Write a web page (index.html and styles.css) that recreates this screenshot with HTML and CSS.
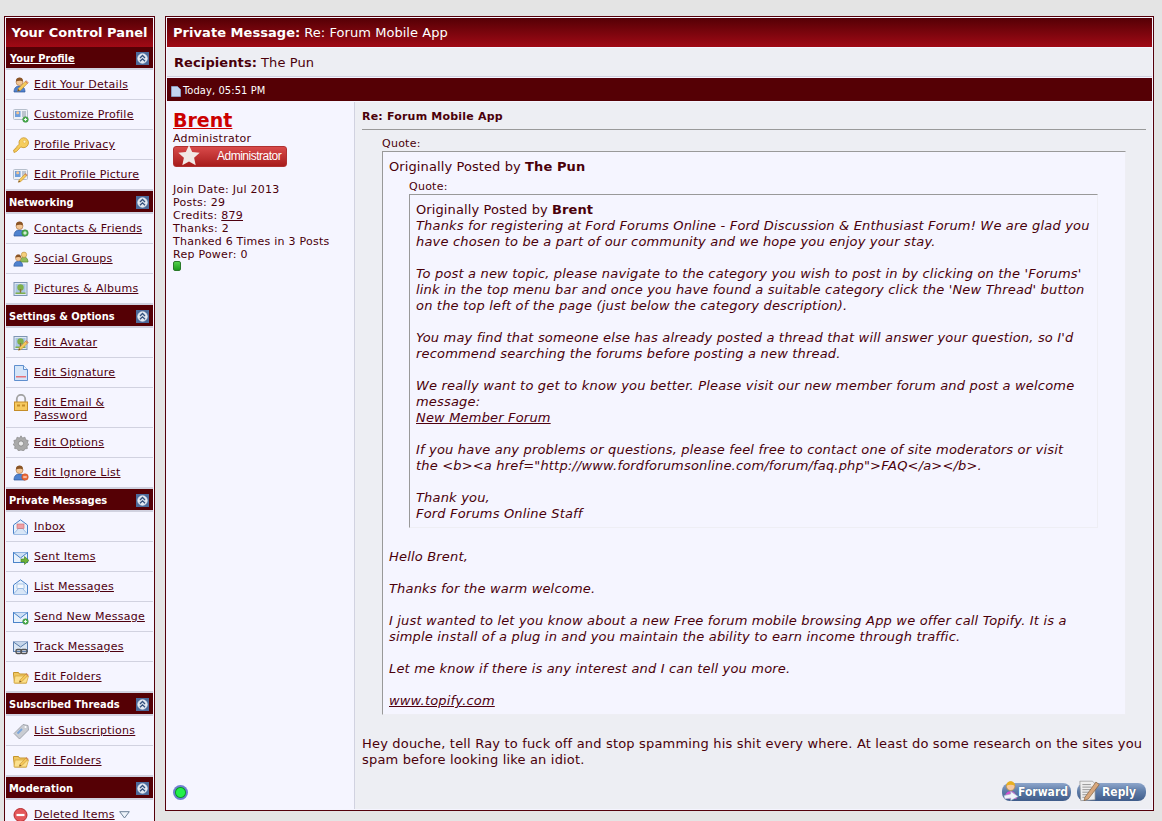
FILE: index.html
```html
<!DOCTYPE html>
<html lang="en">
<head>
<meta charset="utf-8">
<title>Private Message: Re: Forum Mobile App</title>
<link rel="stylesheet" href="styles.css">
</head>
<body>
<svg class="sprite" xmlns="http://www.w3.org/2000/svg">
  <defs>
    <symbol id="s-person" viewBox="0 0 16 16">
      <path d="M1 15c0-4 2-6 5.500-6s5.500 2 5.500 6z" fill="#4f82cf" stroke="#2c5596" stroke-width=".7"/>
      <circle cx="6.500" cy="5" r="3.500" fill="#f2c594" stroke="#a9713e" stroke-width=".6"/>
      <path d="M3 4.500C2.800 1.500 5 .6 6.700 .6s3.400 1 3.200 3.900C8.500 3.500 5 3.500 3 4.500z" fill="#8a5426"/>
    </symbol>
    <symbol id="s-pencil" viewBox="0 0 16 16">
      <path d="M3 11.500 11.500 3l2.500 2.500L5.500 14 2 15z" fill="#f4c95a" stroke="#b9822a" stroke-width=".7"/>
      <path d="M11.500 3l1-1 2.500 2.500-1 1z" fill="#e99a7a" stroke="#b9622a" stroke-width=".6"/>
      <path d="M2 15l.8-2.600 1.800 1.800z" fill="#6b4a2a"/>
    </symbol>
    <symbol id="s-plus" viewBox="0 0 16 16">
      <circle cx="8" cy="8" r="6.500" fill="#4caf50" stroke="#2b7a30"/>
      <path d="M8 4.500v7M4.500 8h7" stroke="#fff" stroke-width="2"/>
    </symbol>
    <symbol id="s-minus" viewBox="0 0 16 16">
      <circle cx="8" cy="8" r="6.500" fill="#ec6a3a" stroke="#b8431a"/>
      <path d="M4.500 8h7" stroke="#fff" stroke-width="2"/>
    </symbol>
    <symbol id="s-card" viewBox="0 0 16 16">
      <rect x=".5" y="2.500" width="14" height="10" rx="1" fill="#eef1f6" stroke="#b6bfcc"/>
      <rect x="2" y="4" width="5.500" height="6" fill="#6f9fdc"/>
      <circle cx="4.700" cy="5.800" r="1.500" fill="#f2c594"/>
      <path d="M9 5h4M9 7h4M9 9h4" stroke="#8a97a8"/>
    </symbol>
    <symbol id="s-pic" viewBox="0 0 16 16">
      <rect x="1" y="1.500" width="13" height="13" fill="#dfe8f2" stroke="#7e95b3"/>
      <rect x="2.500" y="3" width="10" height="10" fill="#a8c4e4"/>
      <circle cx="7.500" cy="6.500" r="3.200" fill="#7fb04a"/>
      <rect x="6.800" y="8" width="1.400" height="5" fill="#8b6a3a"/>
      <rect x="2.500" y="11.500" width="10" height="1.500" fill="#7fb04a"/>
    </symbol>
    <symbol id="s-env" viewBox="0 0 16 16">
      <rect x=".5" y="3.500" width="14" height="10" fill="#e8f1fb" stroke="#4b83c9"/>
      <path d="M.5 3.500 7.500 9l7-5.500" fill="#cfe0f5" stroke="#4b83c9"/>
    </symbol>
    <symbol id="s-envopen" viewBox="0 0 16 16">
      <path d="M.5 6 7.500.8 14.500 6v9H.5z" fill="#e8f1fb" stroke="#4b83c9"/>
      <path d="M.5 15 5.500 9.500h4L14.500 15" fill="#d8e6f7" stroke="#7ea8dc" stroke-width=".7"/>
    </symbol>
    <symbol id="s-folder" viewBox="0 0 16 16">
      <path d="M.5 5V3.500h5l1 1.500h7v9h-12z" fill="#f0c760" stroke="#c4952c"/>
      <path d="M2 7h13.500l-2 7h-12.500z" fill="#fbe08d" stroke="#d2a43a" stroke-width=".7"/>
    </symbol>
    <symbol id="s-up" viewBox="0 0 13 13">
      <rect width="13" height="13" fill="#4d6b9b"/>
      <circle cx="6.500" cy="6.500" r="4.700" fill="#dfe6f0" stroke="#f4f6fa" stroke-width=".8"/>
      <path d="M4 6 6.500 3.500 9 6M4 9.300 6.500 6.800 9 9.300" fill="none" stroke="#34507c" stroke-width="1.300"/>
    </symbol>
  </defs>
</svg>

<div class="page">
  <aside class="panel">
    <div class="panel-title">Your Control Panel</div>

    <section class="group">
      <h3 class="group-head"><a class="head-link" href="#">Your Profile</a><svg class="toggle"><use href="#s-up"/></svg></h3>
      <a class="row" href="#"><span class="ico"><svg viewBox="0 0 16 16"><use href="#s-person"/><use href="#s-pencil" x="3" y="2" width="13" height="13"/></svg></span><span class="lbl">Edit Your Details</span></a>
      <a class="row" href="#"><span class="ico"><svg viewBox="0 0 16 16"><use href="#s-card"/><use href="#s-plus" x="9" y="9" width="7" height="7"/></svg></span><span class="lbl">Customize Profile</span></a>
      <a class="row" href="#"><span class="ico"><svg viewBox="0 0 16 16"><path d="M10.500 .7a5 5 0 1 1-2.700 9.200L3.500 14.500 1 15.500.6 13l1.400-.5.300-1.400 1.400-.2.200-1.400 2.300-2.300A5 5 0 0 1 10.500 .7z" fill="#f6cd5c" stroke="#c9952a" stroke-width=".8"/><circle cx="11.500" cy="4.700" r="1.400" fill="#fff3c4" stroke="#d8a83c" stroke-width=".5"/></svg></span><span class="lbl">Profile Privacy</span></a>
      <a class="row" href="#"><span class="ico"><svg viewBox="0 0 16 16"><use href="#s-card"/><use href="#s-pencil" x="4" y="5" width="11" height="11"/></svg></span><span class="lbl">Edit Profile Picture</span></a>
    </section>

    <section class="group">
      <h3 class="group-head">Networking<svg class="toggle"><use href="#s-up"/></svg></h3>
      <a class="row" href="#"><span class="ico"><svg viewBox="0 0 16 16"><use href="#s-person"/><use href="#s-plus" x="8" y="8" width="8" height="8"/></svg></span><span class="lbl">Contacts &amp; Friends</span></a>
      <a class="row" href="#"><span class="ico"><svg viewBox="0 0 16 16"><path d="M7 11c0-3 1.500-5 4-5s4 2 4 5z" fill="#90bb58" stroke="#5b8a2c" stroke-width=".7"/><circle cx="11" cy="3.800" r="2.700" fill="#f5cf7c" stroke="#b78a3c" stroke-width=".6"/><use href="#s-person" x="0" y="3" width="13" height="13"/></svg></span><span class="lbl">Social Groups</span></a>
      <a class="row" href="#"><span class="ico"><svg viewBox="0 0 16 16"><use href="#s-pic"/></svg></span><span class="lbl">Pictures &amp; Albums</span></a>
    </section>

    <section class="group">
      <h3 class="group-head">Settings &amp; Options<svg class="toggle"><use href="#s-up"/></svg></h3>
      <a class="row" href="#"><span class="ico"><svg viewBox="0 0 16 16"><use href="#s-pic"/><use href="#s-pencil" x="4" y="4" width="12" height="12"/></svg></span><span class="lbl">Edit Avatar</span></a>
      <a class="row" href="#"><span class="ico"><svg viewBox="0 0 16 16"><path d="M1.500 .5h9l4 4v11h-13z" fill="#d5e5f8" stroke="#5f8fce"/><path d="M10.500 .5v4h4" fill="#eef5fd" stroke="#5f8fce"/><rect x="3" y="11" width="10" height="1.500" fill="#e5737a"/></svg></span><span class="lbl">Edit Signature</span></a>
      <a class="row tall" href="#"><span class="ico"><svg class="lock" viewBox="0 0 16 17"><path d="M3.800 9V5a4.200 4.200 0 0 1 8.400 0v4" fill="none" stroke="#a3a3a3" stroke-width="1.800"/><rect x="1.500" y="8" width="13" height="8.500" fill="#f6c95e" stroke="#c58d28"/><rect x="4" y="10.500" width="3" height="2" fill="#c58d28"/><rect x="9" y="10.500" width="3" height="2" fill="#c58d28"/></svg></span><span class="lbl">Edit Email &amp;<br>Password</span></a>
      <a class="row" href="#"><span class="ico"><svg viewBox="0 0 16 16"><path d="M8 .8 9.500 3l2.500-.8.700 2.600 2.500.7-.8 2.500L16 9.500l-2 1.500.4 2.600-2.600.3-1.300 2.200L8 15l-2.500 1-1.300-2.200-2.600-.3L2 11 0 9.500 1.600 8 .8 5.500l2.500-.7.700-2.600 2.500.8z" fill="#a9a9a9" stroke="#818181" stroke-width=".6"/><circle cx="8" cy="8.500" r="2.600" fill="#e9e9e9" stroke="#7a7a7a" stroke-width=".7"/></svg></span><span class="lbl">Edit Options</span></a>
      <a class="row" href="#"><span class="ico"><svg viewBox="0 0 16 16"><use href="#s-person"/><use href="#s-minus" x="8" y="8" width="8" height="8"/></svg></span><span class="lbl">Edit Ignore List</span></a>
    </section>

    <section class="group">
      <h3 class="group-head">Private Messages<svg class="toggle"><use href="#s-up"/></svg></h3>
      <a class="row" href="#"><span class="ico"><svg viewBox="0 0 16 16"><use href="#s-envopen"/><rect x="4" y="5" width="7" height="4.500" fill="#f0a0a4" stroke="#c96a70" stroke-width=".6"/></svg></span><span class="lbl">Inbox</span></a>
      <a class="row" href="#"><span class="ico"><svg viewBox="0 0 16 16"><use href="#s-env"/><path d="M8 10h3.500V7.500L16 11.500 11.500 15.500V13H8z" fill="#6db23a" stroke="#3f7f1c" stroke-width=".6"/></svg></span><span class="lbl">Sent Items</span></a>
      <a class="row" href="#"><span class="ico"><svg viewBox="0 0 16 16"><use href="#s-envopen"/><rect x="4" y="5" width="7" height="4.500" fill="#f4f8fd" stroke="#7ea8dc" stroke-width=".6"/></svg></span><span class="lbl">List Messages</span></a>
      <a class="row" href="#"><span class="ico"><svg viewBox="0 0 16 16"><use href="#s-env"/><use href="#s-plus" x="9" y="9" width="7" height="7"/></svg></span><span class="lbl">Send New Message</span></a>
      <a class="row" href="#"><span class="ico"><svg viewBox="0 0 16 16"><rect x=".5" y="3" width="14" height="9.500" fill="#dbe6f3" stroke="#5a7dac"/><path d="M.5 3 7.500 8l7-5" fill="#c6d6ea" stroke="#5a7dac"/><rect x="3" y="10.500" width="5.500" height="4" rx="1.500" fill="none" stroke="#555" stroke-width="1.400"/><rect x="8" y="10.500" width="6" height="4" rx="1.500" fill="none" stroke="#555" stroke-width="1.400"/></svg></span><span class="lbl">Track Messages</span></a>
      <a class="row" href="#"><span class="ico"><svg viewBox="0 0 16 16"><use href="#s-folder"/><use href="#s-pencil" x="5" y="3" width="11" height="11"/></svg></span><span class="lbl">Edit Folders</span></a>
    </section>

    <section class="group">
      <h3 class="group-head">Subscribed Threads<svg class="toggle"><use href="#s-up"/></svg></h3>
      <a class="row" href="#"><span class="ico"><svg viewBox="0 0 16 16"><path d="M1 10.500 10 1.500l5 1 .5 4.500-9 9z" fill="#c9ccd2" stroke="#92969e" stroke-width=".8"/><path d="M4.500 10.500 9 6" stroke="#7aa6dc" stroke-width="2"/><circle cx="12.500" cy="4" r="1" fill="#fff"/></svg></span><span class="lbl">List Subscriptions</span></a>
      <a class="row" href="#"><span class="ico"><svg viewBox="0 0 16 16"><use href="#s-folder"/><use href="#s-pencil" x="5" y="3" width="11" height="11"/></svg></span><span class="lbl">Edit Folders</span></a>
    </section>

    <section class="group">
      <h3 class="group-head">Moderation<svg class="toggle"><use href="#s-up"/></svg></h3>
      <a class="row" href="#"><span class="ico"><svg viewBox="0 0 16 16"><circle cx="7.500" cy="8" r="6.500" fill="#e4575a" stroke="#b82a2e"/><path d="M3.500 8h8" stroke="#fff" stroke-width="2.200"/></svg></span><span class="lbl">Deleted Items</span><svg class="tri" viewBox="0 0 11 8"><path d="M.7.7h9.600L5.500 7z" fill="#eef3fa" stroke="#6d8098"/></svg></a>
    </section>
  </aside>

  <main class="main">
    <h1 class="main-title"><b>Private Message:</b> Re: Forum Mobile App</h1>
    <div class="recipients"><b>Recipients:</b> The Pun</div>
    <div class="date-bar"><svg class="page-ico" viewBox="0 0 10 11"><path d="M.5.500h6l3 3v7h-9z" fill="#c3d5ef" stroke="#8ea9d2" stroke-width=".8"/></svg>Today, 05:51 PM</div>

    <div class="post">
      <div class="author">
        <a class="author-name" href="#">Brent</a>
        <div class="author-role">Administrator</div>
        <div class="badge"><svg class="badge-star" viewBox="0 0 22 21"><path d="M11 0l3.200 7 7.500.8-5.600 5 1.600 7.400L11 16.500l-6.700 3.700 1.600-7.400-5.600-5L7.800 7z" fill="#f1e9e6"/></svg>Administrator</div>
        <ul class="stats">
          <li>Join Date: Jul 2013</li>
          <li>Posts: 29</li>
          <li>Credits: <a href="#">879</a></li>
          <li>Thanks: 2</li>
          <li>Thanked 6 Times in 3 Posts</li>
          <li>Rep Power: 0</li>
        </ul>
        <div class="rep"></div>
        <div class="online"></div>
      </div>

      <div class="content">
        <div class="post-title">Re: Forum Mobile App</div>
        <hr class="rule">
        <div class="quote-label">Quote:</div>
        <div class="quote">
          <div class="by">Originally Posted by <b>The Pun</b></div>
          <div class="quote-label nested">Quote:</div>
          <div class="quote inner">
            <div class="by">Originally Posted by <b>Brent</b></div>
            <div class="qtext">Thanks for registering at Ford Forums Online - Ford Discussion &amp; Enthusiast Forum! We are glad you<br>have chosen to be a part of our community and we hope you enjoy your stay.<br><br>To post a new topic, please navigate to the category you wish to post in by clicking on the 'Forums'<br>link in the top menu bar and once you have found a suitable category click the 'New Thread' button<br>on the top left of the page (just below the category description).<br><br>You may find that someone else has already posted a thread that will answer your question, so I'd<br>recommend searching the forums before posting a new thread.<br><br>We really want to get to know you better. Please visit our new member forum and post a welcome<br>message:<br><a href="#">New Member Forum</a><br><br>If you have any problems or questions, please feel free to contact one of site moderators or visit<br>the &lt;b&gt;&lt;a href="http://www.fordforumsonline.com/forum/faq.php"&gt;FAQ&lt;/a&gt;&lt;/b&gt;.<br><br>Thank you,<br>Ford Forums Online Staff</div>
          </div>
          <div class="qtext reply-text">Hello Brent,<br><br>Thanks for the warm welcome.<br><br>I just wanted to let you know about a new Free forum mobile browsing App we offer call Topify. It is a<br>simple install of a plug in and you maintain the ability to earn income through traffic.<br><br>Let me know if there is any interest and I can tell you more.<br><br><a href="#">www.topify.com</a></div>
        </div>
        <div class="message">Hey douche, tell Ray to fuck off and stop spamming his shit every where. At least do some research on the sites you<br>spam before looking like an idiot.</div>
        <div class="actions">
          <a class="btn" href="#"><svg class="btn-ico" viewBox="0 0 20 24"><path d="M2 22c0-6 3-9 7-9s7 3 7 9z" fill="#d84fd0"/><circle cx="9" cy="7" r="5" fill="#f6c9a0" stroke="#b98a3c" stroke-width=".8"/><path d="M4 6.500C4 2 7 1 9 1s5 1 5 5.500C11 5 7 5 4 6.500z" fill="#e8b020"/><path d="M1 18l8-2v-3l9 6-9 5v-3l-7 1z" fill="#f0f4fa" stroke="#8fa3c0" stroke-width=".7"/></svg>Forward</a>
          <a class="btn btn-reply" href="#"><svg class="btn-ico reply-ico" viewBox="0 0 26 26"><path d="M1 2h15l3 3v19l-17 1z" fill="#eeeeee" stroke="#8e8e8e" stroke-width=".8"/><path d="M4 6h10M4 9h11M4 12h11M4 15h8M4 18h7M4 21h7" stroke="#8a8a8a"/><path d="M7 21 20 3l4 3-13 17-5 2z" fill="#d8a77c" stroke="#80603f" stroke-width=".8"/></svg>Reply</a>
        </div>
      </div>
    </div>
  </main>
</div>
</body>
</html>
```

FILE: styles.css
```css
* { box-sizing: border-box; }

html, body {
  margin: 0;
  height: 821px;
  overflow: hidden;
}

body {
  background: #e4e4e4;
  color: #4a000a;
  font-family: "DejaVu Sans", Verdana, sans-serif;
  font-size: 11px;
  line-height: 13px;
  letter-spacing: .25px;
}

a { color: #4e0010; }

.sprite {
  display: block;
  width: 0;
  height: 0;
}

.page {
  display: flex;
  align-items: flex-start;
  gap: 10px;
  padding: 16px 8px 0 4px;
}

/* Control panel */
.panel {
  flex: none;
  width: 151px;
  border: 1px solid #55000a;
  padding: 1px 1px 0;
  background: #d1d2e0;
  box-shadow: inset 0 0 0 1px #f5f5ff;
}

.panel-title {
  height: 29px;
  display: flex;
  align-items: center;
  justify-content: center;
  background: linear-gradient(#550005, #a00a15);
  color: #fff;
  font-size: 13px;
  font-weight: bold;
  letter-spacing: 0;
  white-space: nowrap;
}

.group { padding-bottom: 1px; }

.group-head {
  display: flex;
  align-items: center;
  justify-content: space-between;
  height: 21px;
  margin: 0 0 2px;
  padding: 1px 4px 0 3px;
  background: #550005;
  color: #fff;
  font-family: "DejaVu Sans Condensed", "DejaVu Sans", sans-serif;
  font-size: 11px;
  font-weight: bold;
  letter-spacing: 0;
  white-space: nowrap;
}

.head-link {
  margin-left: 1px;
  color: #fff;
  text-decoration: underline;
}

.toggle {
  flex: none;
  width: 13px;
  height: 13px;
}

.row {
  display: flex;
  align-items: center;
  min-height: 29px;
  margin-bottom: 1px;
  padding-left: 7px;
  background: #f5f5ff;
  text-decoration: none;
}

.row.tall {
  align-items: flex-start;
  min-height: 39px;
  padding-top: 6px;
}

.row.tall .lbl { margin-top: 2px; }

.ico {
  flex: none;
  width: 16px;
  height: 16px;
  margin-right: 5px;
}

.ico svg {
  display: block;
  width: 16px;
  height: 16px;
}

.ico .lock { height: 17px; }

.lbl {
  text-decoration: underline;
  white-space: nowrap;
}

.tri {
  width: 11px;
  height: 8px;
  margin-left: 4px;
}

/* Main column */
.main {
  flex: none;
  width: 989px;
  height: 795px;
  display: flex;
  flex-direction: column;
  border: 1px solid #55000a;
  padding: 1px;
  background: #f5f5ff;
}

.main-title {
  flex: none;
  height: 29px;
  margin: 0 0 1px;
  padding: 0 6px;
  display: flex;
  align-items: center;
  gap: 4px;
  background: linear-gradient(#550005, #a00a15);
  color: #fff;
  font-size: 13px;
  font-weight: normal;
  letter-spacing: .05px;
  white-space: nowrap;
}

.recipients {
  flex: none;
  height: 29px;
  padding: 0 7px;
  display: flex;
  align-items: center;
  gap: 4px;
  background: #edeef3;
  border-bottom: 1px solid #d1d2e0;
  font-size: 13px;
  letter-spacing: .1px;
  color: #4a000a;
}

.date-bar {
  flex: none;
  height: 22px;
  margin: 2px 0 1px;
  padding: 0 4px;
  display: flex;
  align-items: center;
  background: #550005;
  color: #fff;
  box-shadow: 0 -1px 0 #55000a;
  font-family: "DejaVu Sans Condensed", "DejaVu Sans", sans-serif;
  letter-spacing: .1px;
  white-space: nowrap;
}

.page-ico {
  width: 10px;
  height: 11px;
  margin: 2px 2px 0 0;
}

.post {
  flex: 1;
  min-height: 0;
  display: flex;
}

.author {
  flex: none;
  width: 188px;
  display: flex;
  flex-direction: column;
  padding: 6px 0 9px 6px;
  border-right: 1px solid #d1d2e0;
  background: #f5f5ff;
}

.author-name {
  align-self: flex-start;
  color: #cc0000;
  font-size: 19px;
  line-height: 24px;
  font-weight: bold;
  letter-spacing: 0;
}

.badge {
  position: relative;
  width: 114px;
  height: 21px;
  margin-top: 1px;
  padding-left: 43px;
  border-radius: 3px;
  background: linear-gradient(#d84a4a, #a81c1c);
  border: 1px solid #b03030;
  color: #fff;
  font-family: "Liberation Sans", Arial, sans-serif;
  font-size: 12px;
  line-height: 19px;
  letter-spacing: -.5px;
}

.badge-star {
  position: absolute;
  left: 4px;
  top: -2px;
  width: 22px;
  height: 21px;
}

.stats {
  list-style: none;
  margin: 16px 0 0;
  padding: 0;
}

.rep {
  width: 8px;
  height: 10px;
  border-radius: 2px;
  background: linear-gradient(#52d04a, #1c9a1c);
  border: 1px solid #2a7a2a;
}

.online {
  width: 15px;
  height: 15px;
  margin-top: auto;
  border-radius: 50%;
  background: radial-gradient(circle, #22f04a 0 4px, #0a9a2a 5px, #6f7fd0 6px);
}

.content {
  flex: 1;
  min-width: 0;
  display: flex;
  flex-direction: column;
  padding: 8px 6px 8px 7px;
  background: #edeef3;
}

.post-title {
  font-weight: bold;
  letter-spacing: .2px;
}

.rule {
  width: 100%;
  height: 1px;
  margin: 6px 0 7px;
  border: 0;
  background: #999;
}

.quote-label {
  margin-left: 20px;
  height: 14px;
  font-size: 11px;
  line-height: 13px;
  letter-spacing: .25px;
}

.quote-label.nested { margin-top: 5px; }

.quote {
  margin: 0 20px;
  padding: 7px 7px 5px 6px;
  background: #f5f5ff;
  border-top: 1px solid #999;
  border-left: 1px solid #999;
  border-right: 1px solid #eeeef4;
  border-bottom: 1px solid #eeeef4;
  font-size: 13px;
  line-height: 16px;
  letter-spacing: .18px;
  white-space: nowrap;
}

.by { letter-spacing: .1px; }

.qtext { font-style: italic; }

.reply-text { margin-top: 21px; }

.message {
  margin-top: 21px;
  font-size: 13px;
  line-height: 16px;
  letter-spacing: .18px;
  white-space: nowrap;
}

.actions {
  display: flex;
  justify-content: flex-end;
  gap: 6px;
  margin-top: auto;
}

.btn {
  position: relative;
  display: block;
  width: 69px;
  height: 18px;
  padding-left: 16px;
  border-radius: 8px;
  background: linear-gradient(#8ea6cb 0, #5f7da9 45%, #3f5c8a 100%);
  color: #fff;
  font-family: "DejaVu Sans Condensed", "DejaVu Sans", sans-serif;
  font-size: 12px;
  font-weight: bold;
  line-height: 18px;
  letter-spacing: 0;
  text-decoration: none;
  text-shadow: 0 0 1px #2a3f60;
}

.btn-reply { padding-left: 25px; }

.btn-ico {
  position: absolute;
  left: 1px;
  bottom: 0;
  width: 17px;
  height: 21px;
}

.reply-ico {
  left: 2px;
  bottom: -1px;
  width: 22px;
  height: 23px;
}
```
